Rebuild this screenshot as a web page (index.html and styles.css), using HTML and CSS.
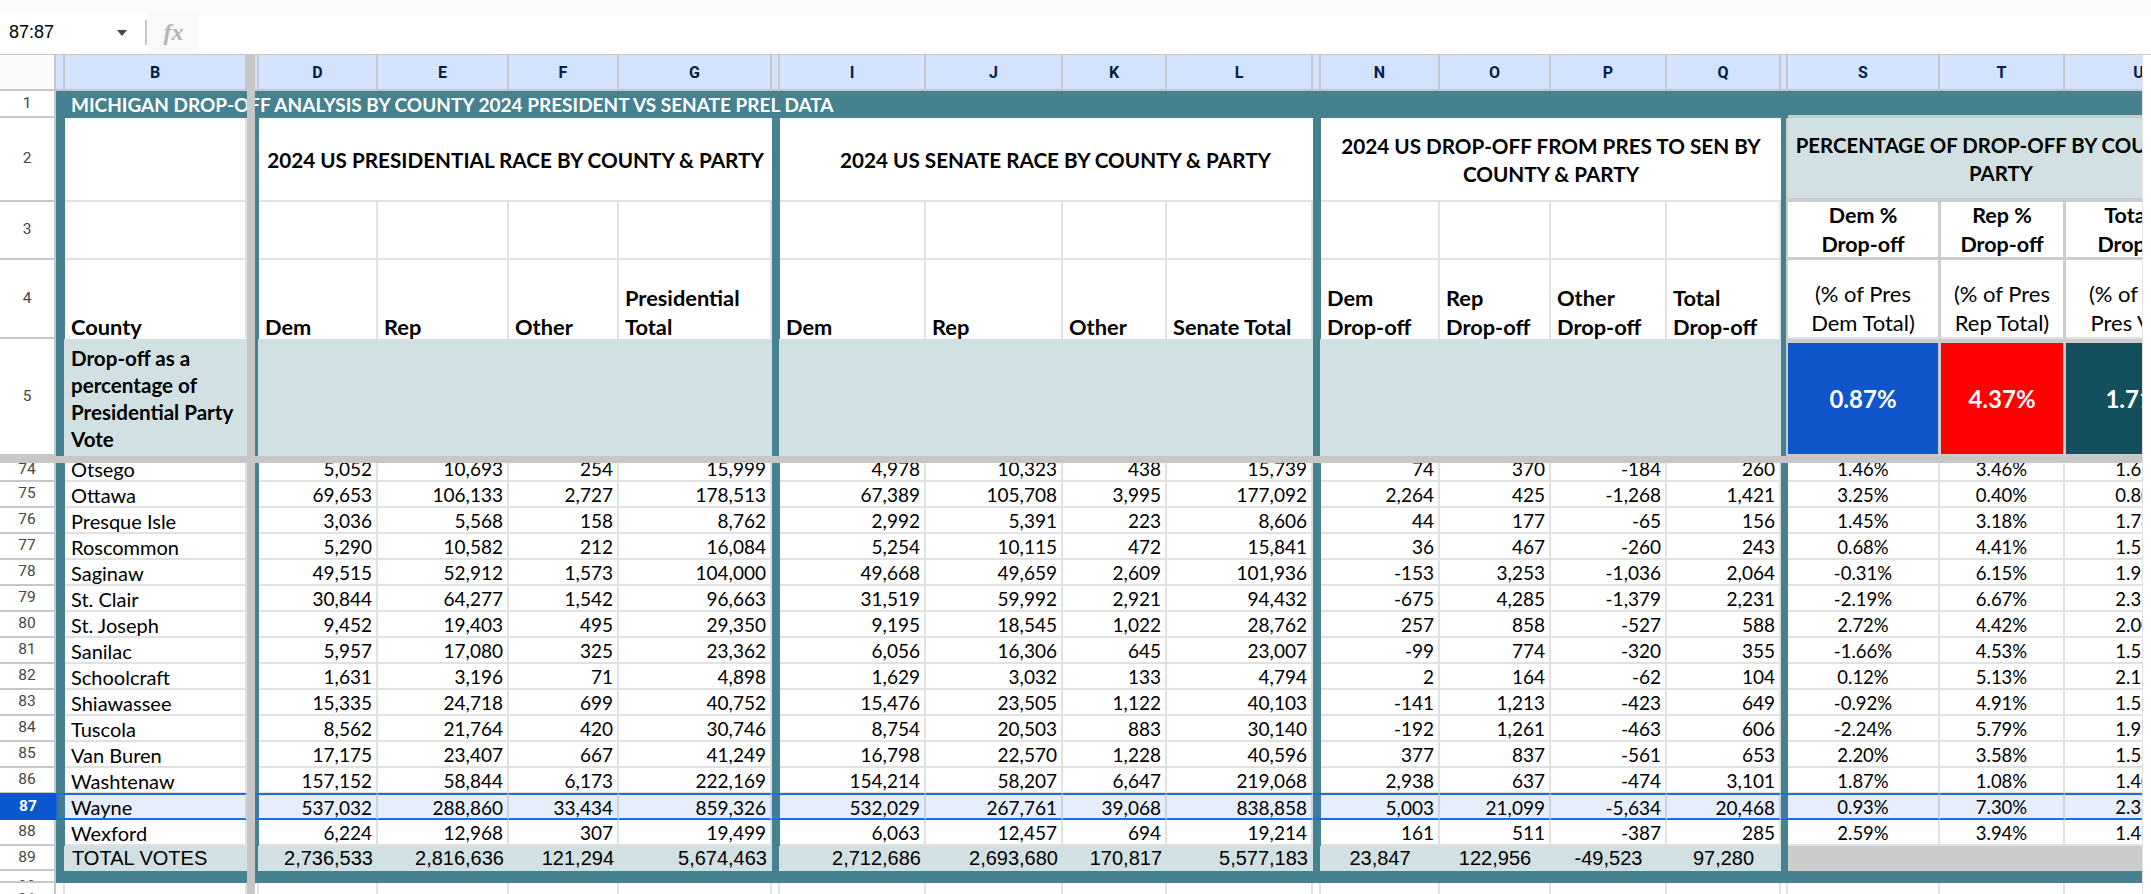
FILE: index.html
```html
<!DOCTYPE html>
<html lang="en">
<head>
<meta charset="utf-8">
<title>Michigan Drop-Off Analysis</title>
<link rel="stylesheet" href="styles.css">
</head>
<body>
<div class="strip"></div>
<div class="fbar">
  <div class="namebox"><span>87:87</span><i class="caret"></i><b class="sep"></b></div>
  <div class="fxbox">fx</div>
  <div class="finput"></div>
</div>
<div class="sheetwrap">
<div class="sheet">
  <div class="row hdr">
    <div class="corner"></div><div></div><div>B</div><div></div><div>D</div><div>E</div><div>F</div><div>G</div><div></div><div>I</div><div>J</div><div>K</div><div>L</div><div></div><div>N</div><div>O</div><div>P</div><div>Q</div><div></div><div>S</div><div>T</div><div>U</div>
  </div>
  <div class="row r1">
    <div class="rh">1</div><div class="t"></div>
    <div class="title">MICHIGAN DROP-OFF ANALYSIS BY COUNTY 2024 PRESIDENT VS SENATE PREL DATA</div>
    <div class="titleend"></div>
  </div>
  <div class="row r2">
    <div class="rh">2</div><div class="t"></div><div class="w"></div><div class="t"></div>
    <div class="head s4">2024 US PRESIDENTIAL RACE BY COUNTY &amp; PARTY</div><div class="t"></div>
    <div class="head s4 senate">2024 US SENATE RACE BY COUNTY &amp; PARTY</div><div class="t"></div>
    <div class="head s4">2024 US DROP-OFF FROM PRES TO SEN BY<br>COUNTY &amp; PARTY</div><div class="t tr"></div>
    <div class="head s3 pctitle">PERCENTAGE OF DROP-OFF BY COUNTY &amp;<br>PARTY</div>
  </div>
  <div class="row r3">
    <div class="rh">3</div><div class="t"></div><div></div><div class="t"></div><div></div><div></div><div></div><div></div><div class="t"></div><div></div><div></div><div></div><div></div><div class="t"></div><div></div><div></div><div></div><div></div><div class="t tr"></div>
    <div class="g">Dem %<br>Drop-off</div><div class="g">Rep %<br>Drop-off</div><div class="g">Total %<br>Drop-off</div>
  </div>
  <div class="row r4">
    <div class="rh">4</div><div class="t"></div><div class="lab"><span>County</span></div><div class="t"></div>
    <div class="lab"><span>Dem</span></div><div class="lab"><span>Rep</span></div><div class="lab"><span>Other</span></div><div class="lab"><span>Presidential<br>Total</span></div><div class="t"></div>
    <div class="lab"><span>Dem</span></div><div class="lab"><span>Rep</span></div><div class="lab"><span>Other</span></div><div class="lab"><span>Senate Total</span></div><div class="t"></div>
    <div class="lab"><span>Dem<br>Drop-off</span></div><div class="lab"><span>Rep<br>Drop-off</span></div><div class="lab"><span>Other<br>Drop-off</span></div><div class="lab"><span>Total<br>Drop-off</span></div><div class="t tr"></div>
    <div class="g"><span>(% of Pres<br>Dem Total)</span></div><div class="g"><span>(% of Pres<br>Rep Total)</span></div><div class="g"><span>(% of Total<br>Pres Vote)</span></div>
  </div>
  <div class="row r5">
    <div class="rh">5</div><div class="t"></div><div class="lt note">Drop-off as a<br>percentage of<br>Presidential Party<br>Vote</div><div class="t"></div>
    <div class="lt s4"></div><div class="t"></div><div class="lt s4"></div><div class="t"></div><div class="lt s4"></div><div class="t tr"></div>
    <div class="big blue">0.87%</div><div class="big red">4.37%</div><div class="big dark">1.71%</div>
  </div>
  <div class="hbar"></div>
  <div class="row d r74"><div class="rh">74</div><div class="t"></div><div class="l">Otsego</div><div class="t"></div><div>5,052</div><div>10,693</div><div>254</div><div>15,999</div><div class="t"></div><div>4,978</div><div>10,323</div><div>438</div><div>15,739</div><div class="t"></div><div>74</div><div>370</div><div>-184</div><div>260</div><div class="t"></div><div class="m">1.46%</div><div class="m">3.46%</div><div class="m">1.63%</div></div>
  <div class="row d"><div class="rh">75</div><div class="t"></div><div class="l">Ottawa</div><div class="t"></div><div>69,653</div><div>106,133</div><div>2,727</div><div>178,513</div><div class="t"></div><div>67,389</div><div>105,708</div><div>3,995</div><div>177,092</div><div class="t"></div><div>2,264</div><div>425</div><div>-1,268</div><div>1,421</div><div class="t"></div><div class="m">3.25%</div><div class="m">0.40%</div><div class="m">0.80%</div></div>
  <div class="row d"><div class="rh">76</div><div class="t"></div><div class="l">Presque Isle</div><div class="t"></div><div>3,036</div><div>5,568</div><div>158</div><div>8,762</div><div class="t"></div><div>2,992</div><div>5,391</div><div>223</div><div>8,606</div><div class="t"></div><div>44</div><div>177</div><div>-65</div><div>156</div><div class="t"></div><div class="m">1.45%</div><div class="m">3.18%</div><div class="m">1.78%</div></div>
  <div class="row d"><div class="rh">77</div><div class="t"></div><div class="l">Roscommon</div><div class="t"></div><div>5,290</div><div>10,582</div><div>212</div><div>16,084</div><div class="t"></div><div>5,254</div><div>10,115</div><div>472</div><div>15,841</div><div class="t"></div><div>36</div><div>467</div><div>-260</div><div>243</div><div class="t"></div><div class="m">0.68%</div><div class="m">4.41%</div><div class="m">1.51%</div></div>
  <div class="row d"><div class="rh">78</div><div class="t"></div><div class="l">Saginaw</div><div class="t"></div><div>49,515</div><div>52,912</div><div>1,573</div><div>104,000</div><div class="t"></div><div>49,668</div><div>49,659</div><div>2,609</div><div>101,936</div><div class="t"></div><div>-153</div><div>3,253</div><div>-1,036</div><div>2,064</div><div class="t"></div><div class="m">-0.31%</div><div class="m">6.15%</div><div class="m">1.98%</div></div>
  <div class="row d"><div class="rh">79</div><div class="t"></div><div class="l">St. Clair</div><div class="t"></div><div>30,844</div><div>64,277</div><div>1,542</div><div>96,663</div><div class="t"></div><div>31,519</div><div>59,992</div><div>2,921</div><div>94,432</div><div class="t"></div><div>-675</div><div>4,285</div><div>-1,379</div><div>2,231</div><div class="t"></div><div class="m">-2.19%</div><div class="m">6.67%</div><div class="m">2.31%</div></div>
  <div class="row d"><div class="rh">80</div><div class="t"></div><div class="l">St. Joseph</div><div class="t"></div><div>9,452</div><div>19,403</div><div>495</div><div>29,350</div><div class="t"></div><div>9,195</div><div>18,545</div><div>1,022</div><div>28,762</div><div class="t"></div><div>257</div><div>858</div><div>-527</div><div>588</div><div class="t"></div><div class="m">2.72%</div><div class="m">4.42%</div><div class="m">2.00%</div></div>
  <div class="row d"><div class="rh">81</div><div class="t"></div><div class="l">Sanilac</div><div class="t"></div><div>5,957</div><div>17,080</div><div>325</div><div>23,362</div><div class="t"></div><div>6,056</div><div>16,306</div><div>645</div><div>23,007</div><div class="t"></div><div>-99</div><div>774</div><div>-320</div><div>355</div><div class="t"></div><div class="m">-1.66%</div><div class="m">4.53%</div><div class="m">1.52%</div></div>
  <div class="row d"><div class="rh">82</div><div class="t"></div><div class="l">Schoolcraft</div><div class="t"></div><div>1,631</div><div>3,196</div><div>71</div><div>4,898</div><div class="t"></div><div>1,629</div><div>3,032</div><div>133</div><div>4,794</div><div class="t"></div><div>2</div><div>164</div><div>-62</div><div>104</div><div class="t"></div><div class="m">0.12%</div><div class="m">5.13%</div><div class="m">2.12%</div></div>
  <div class="row d"><div class="rh">83</div><div class="t"></div><div class="l">Shiawassee</div><div class="t"></div><div>15,335</div><div>24,718</div><div>699</div><div>40,752</div><div class="t"></div><div>15,476</div><div>23,505</div><div>1,122</div><div>40,103</div><div class="t"></div><div>-141</div><div>1,213</div><div>-423</div><div>649</div><div class="t"></div><div class="m">-0.92%</div><div class="m">4.91%</div><div class="m">1.59%</div></div>
  <div class="row d"><div class="rh">84</div><div class="t"></div><div class="l">Tuscola</div><div class="t"></div><div>8,562</div><div>21,764</div><div>420</div><div>30,746</div><div class="t"></div><div>8,754</div><div>20,503</div><div>883</div><div>30,140</div><div class="t"></div><div>-192</div><div>1,261</div><div>-463</div><div>606</div><div class="t"></div><div class="m">-2.24%</div><div class="m">5.79%</div><div class="m">1.97%</div></div>
  <div class="row d"><div class="rh">85</div><div class="t"></div><div class="l">Van Buren</div><div class="t"></div><div>17,175</div><div>23,407</div><div>667</div><div>41,249</div><div class="t"></div><div>16,798</div><div>22,570</div><div>1,228</div><div>40,596</div><div class="t"></div><div>377</div><div>837</div><div>-561</div><div>653</div><div class="t"></div><div class="m">2.20%</div><div class="m">3.58%</div><div class="m">1.58%</div></div>
  <div class="row d"><div class="rh">86</div><div class="t"></div><div class="l">Washtenaw</div><div class="t"></div><div>157,152</div><div>58,844</div><div>6,173</div><div>222,169</div><div class="t"></div><div>154,214</div><div>58,207</div><div>6,647</div><div>219,068</div><div class="t"></div><div>2,938</div><div>637</div><div>-474</div><div>3,101</div><div class="t"></div><div class="m">1.87%</div><div class="m">1.08%</div><div class="m">1.40%</div></div>
  <div class="row d sel"><div class="rh">87</div><div class="t a"></div><div class="l">Wayne</div><div class="t"></div><div>537,032</div><div>288,860</div><div>33,434</div><div>859,326</div><div class="t"></div><div>532,029</div><div>267,761</div><div>39,068</div><div>838,858</div><div class="t"></div><div>5,003</div><div>21,099</div><div>-5,634</div><div>20,468</div><div class="t"></div><div class="m">0.93%</div><div class="m">7.30%</div><div class="m">2.38%</div></div>
  <div class="row d"><div class="rh">88</div><div class="t"></div><div class="l">Wexford</div><div class="t"></div><div>6,224</div><div>12,968</div><div>307</div><div>19,499</div><div class="t"></div><div>6,063</div><div>12,457</div><div>694</div><div>19,214</div><div class="t"></div><div>161</div><div>511</div><div>-387</div><div>285</div><div class="t"></div><div class="m">2.59%</div><div class="m">3.94%</div><div class="m">1.46%</div></div>
  <div class="row total"><div class="rh">89</div><div class="t"></div><div class="lt l">TOTAL VOTES</div><div class="t"></div><div class="lt">2,736,533</div><div class="lt">2,816,636</div><div class="lt">121,294</div><div class="lt">5,674,463</div><div class="t"></div><div class="lt">2,712,686</div><div class="lt">2,693,680</div><div class="lt">170,817</div><div class="lt">5,577,183</div><div class="t"></div><div class="lt m">23,847</div><div class="lt m">122,956</div><div class="lt m">-49,523</div><div class="lt m">97,280</div><div class="t"></div><div class="gray s3"></div></div>
  <div class="row foot"><div class="rh">90</div><div class="t s21"></div></div>
  <div class="row blank"><div class="rh">91</div><div></div><div></div><div></div><div></div><div></div><div></div><div></div><div></div><div></div><div></div><div></div><div></div><div></div><div></div><div></div><div></div><div></div><div></div><div></div><div></div><div></div></div>
  <div class="vbar"></div>
</div>
</div>
</body>
</html>
```
FILE: styles.css
```css
:root {
  --cols: 56px 9px 182px 12px 119px 131px 110px 153px 8px 146px 137px 104px 146px 8px 119px 111px 116px 114px 7px 152px 125px 149px;
  --teal: #45818e;
  --light: #d0e0e3;
  --rule: #e1e1e1;
  --frame: #c7c7c7;
}
* { box-sizing: border-box; }
html, body { margin: 0; height: 894px; overflow: hidden; background: #fff; }
body { font-family: "Liberation Sans", Arial, sans-serif; color: #000; }

.strip { height: 13px; background: #f9fbfd; }
.fbar { display: flex; height: 41px; background: #f9fbfd; }
.namebox { display: flex; align-items: center; width: 148px; background: #fff; padding: 0 0 2px 9px; font-size: 18px; }
.caret { width: 0; height: 0; margin-left: 63px; border-left: 5.5px solid transparent; border-right: 5.5px solid transparent; border-top: 6px solid #444746; }
.sep { width: 2px; height: 25px; margin-left: 18px; background: #c7c7c7; }
.fxbox { width: 51px; display: flex; align-items: center; justify-content: center; background: #f8f9fa; color: #b4b4b4; font: italic 700 24px "Liberation Serif", serif; padding-bottom: 2px; }
.finput { flex: 1; margin-top: 3px; background: #fff; }

.sheetwrap { height: 840px; border-top: 1px solid #c7c7c7; background: #fff; }
.sheet { position: relative; width: 2143px; height: 839px; overflow: hidden; border-right: 1px solid #e3e3e3; font-family: Lato, sans-serif; font-size: 18.5px; }

.row { display: grid; grid-template-columns: var(--cols); }
.row > div { display: flex; align-items: center; min-width: 0; overflow: hidden; white-space: nowrap; border-right: 2px solid var(--rule); border-bottom: 2px solid var(--rule); }
.row > .rh { justify-content: center; background: #fff; color: #444746; font: 15.5px Roboto, sans-serif; border-right: 2px solid var(--frame); border-bottom: 2px solid var(--frame); padding-bottom: 2px; }
.row > .t { background: var(--teal); border: 0; }
.row > .tr { border-right: 2px solid #ccc; }

.hdr { height: 36px; }
.hdr > div { justify-content: center; background: #d3e3fd; color: #041e49; font: 700 16px Roboto, sans-serif; border-right: 2px solid var(--frame); border-bottom: 2px solid var(--frame); }
.hdr > .corner { background: #f8f9fa; }

.r1 { height: 27px; }
.row > .title { grid-column: span 17; background: var(--teal); border: 0; color: #fff; font-size: 19px; font-weight: 700; padding-left: 6px; overflow: visible; }
.row > .titleend { grid-column: span 3; background: var(--teal); border: 0; border-bottom: 3px solid #ccc; }

.r2 { height: 84px; }
.row > .w { background: #fff; }
.s3 { grid-column: span 3; }
.s4 { grid-column: span 4; }
.s21 { grid-column: span 21; }
.row > .head { justify-content: center; text-align: center; font-size: 20.7px; font-weight: 700; line-height: 28px; background: #fff; padding-top: 2px; border-right: 0; }
.row > .senate { padding-left: 18px; }
.row > .pctitle { background: var(--light); border-bottom: 4px solid #ccc; font-size: 20.4px; }

.r3 { height: 58px; }
.r3 > .g { justify-content: center; text-align: center; font-size: 21.5px; font-weight: 700; line-height: 29px; border-bottom: 3px solid #ccc; }
.row > .g { border-right: 2px solid #ccc; }
.row > .g + .g { border-left: 1px solid #ccc; }

.r4 { height: 79px; }
.r4 > .lab { align-items: flex-end; font-size: 21.8px; font-weight: 700; line-height: 29px; padding-left: 6px; overflow: visible; border-bottom: 0; }
.r4 > .lab span { margin-bottom: -1.5px; }
.r4 > .g { align-items: flex-end; justify-content: center; text-align: center; font-size: 22px; line-height: 29px; }
.r4 > .g span { margin-bottom: 0; }

.r5 { height: 117px; }
.row > .lt { background: var(--light); border: 0; margin-left: -1px; }
.row > .note { font-size: 20.6px; font-weight: 700; line-height: 27px; padding: 3px 0 0 7px; }
.row > .big { justify-content: center; color: #fff; font-size: 24px; font-weight: 700; border-top: 4px solid #ccc; border-bottom: 2px solid #ccc; border-right: 2px solid #ccc; }
.row > .big + .big { border-left: 1px solid #ccc; }
.blue { background: #1155cc; }
.red { background: #ff0000; }
.dark { background: #134f5c; }

.hbar { height: 7px; background: var(--frame); }
.vbar { position: absolute; left: 247px; top: 0; bottom: 0; width: 8px; background: var(--frame); }

.d { height: 26px; font-size: 19px; }
.d > div { justify-content: flex-end; padding: 1px 4px 0 0; }
.row > .rh { padding-right: 0; }
.r74 { height: 19px; }
.r74 > div { align-items: flex-end; line-height: 22px; }
.d > .l { justify-content: flex-start; padding: 1px 0 0 6px; font-size: 20px; }
.d > .m { justify-content: center; padding: 1px 0 0; font-size: 18.5px; }
.d > .m:last-child { padding-left: 5px; }
.d > .rh { justify-content: center; padding: 0 0 2px; }
.sel > div { background: #e6eefc; border-color: #c9d3e6; border-top: 2px solid #1a6fdb; border-bottom: 2px solid #1a6fdb; }
.sel > .rh { background: #0b57d0; color: #fff; font-weight: 700; border: 0; }
.sel > .t { background: #3f7c99; border-top: 2px solid #1a6fdb; border-bottom: 2px solid #1a6fdb; }
.sel > .a { border-left: 2px solid #1a6fdb; }
.sel { margin-top: -1px; height: 27px; }

.total { height: 25px; font: 20px "Liberation Sans", Arial, sans-serif; }
.total > .lt { justify-content: flex-end; padding-right: 5px; border: 0; }
.total > .lt.l { justify-content: flex-start; padding: 0 0 0 8px; }
.total > .lt.m { justify-content: center; padding-right: 0; }
.total > .gray { background: #cccccc; border: 0; }
.foot { height: 12px; }
.foot > .rh { align-items: flex-start; padding: 6px 0 0; font-size: 15px; }
.blank { height: 40px; }
.blank > .rh { align-items: flex-start; padding: 7px 0 0; border-bottom: 0; }
.blank > div { border-bottom: 0; }
```
